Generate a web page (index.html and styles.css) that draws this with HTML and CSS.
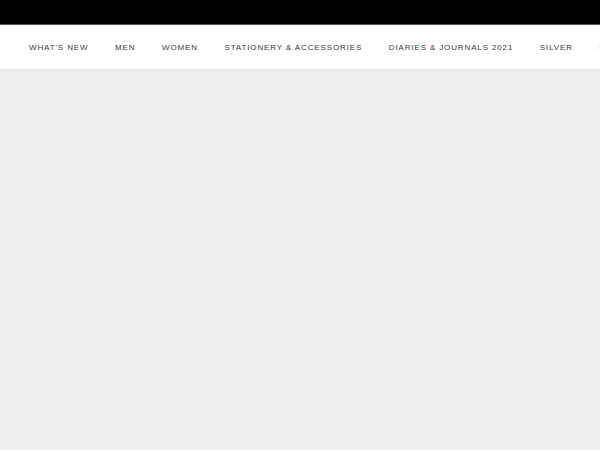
FILE: index.html
```
<!DOCTYPE html>
<html>
<head>
<meta charset="utf-8">
<link rel="stylesheet" href="styles.css">
</head>
<body>
<div class="topbar"></div>
<nav class="nav">
  <a class="nav-item">WHAT'S NEW</a>
  <a class="nav-item">MEN</a>
  <a class="nav-item">WOMEN</a>
  <a class="nav-item">STATIONERY &amp; ACCESSORIES</a>
  <a class="nav-item">DIARIES &amp; JOURNALS 2021</a>
  <a class="nav-item">SILVER</a>
  <a class="nav-item">HOME</a>
</nav>
<main class="hero"></main>
</body>
</html>
```
FILE: styles.css
```
html, body {
  margin: 0;
  padding: 0;
  background: #efefef;
  overflow: hidden;
}
body {
  width: 600px;
  height: 450px;
  font-family: "Liberation Sans", Arial, sans-serif;
}
.topbar {
  height: 24px;
  background: #000;
  border-bottom: 1px solid #555;
}
.nav {
  height: 44px;
  background: #fff;
  border-bottom: 1px solid #e6e6e6;
  display: flex;
  align-items: center;
  gap: 26.6px;
  padding-left: 29px;
  white-space: nowrap;
  overflow: hidden;
}
.nav-item {
  font-size: 8px;
  letter-spacing: 0.87px;
  color: #3a3a3a;
  flex: none;
  padding-top: 1px;
}
.hero {
  height: 380px;
  background: #efefef;
}
```
